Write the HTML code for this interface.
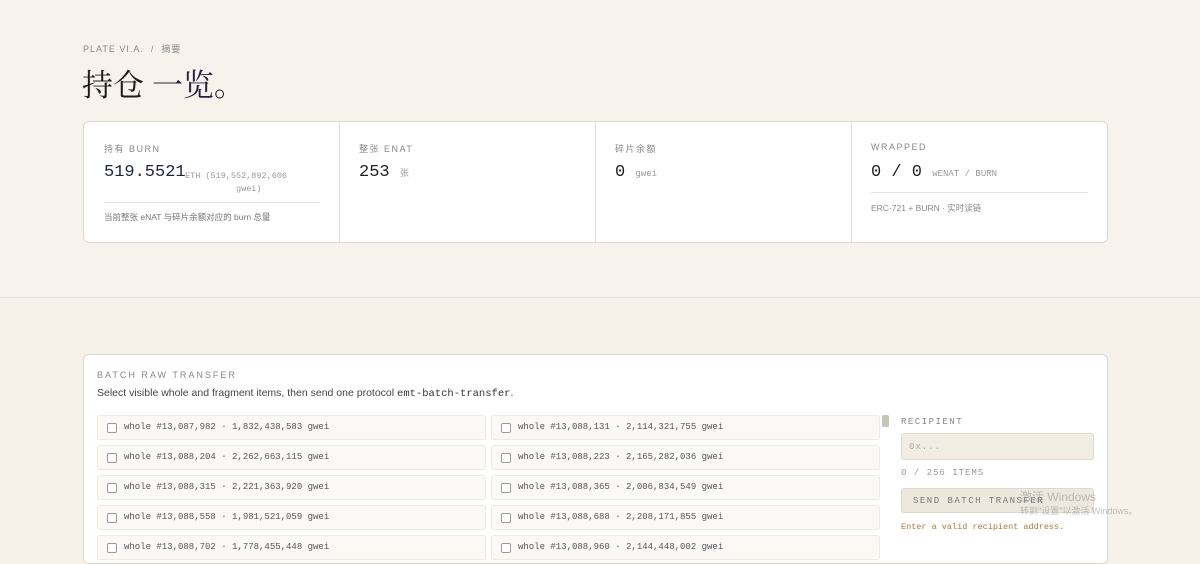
<!DOCTYPE html>
<html><head><meta charset="utf-8"><style>
*{box-sizing:border-box;margin:0;padding:0}
body{width:1200px;height:547px;overflow:hidden;background:#f6f2ea;font-family:"Liberation Sans","Noto Sans CJK SC",sans-serif;position:relative;color:#222}
.abs{position:absolute}
.mono{font-family:"Liberation Mono","Noto Sans CJK SC",monospace}
.lbl{font-size:9px;letter-spacing:1.5px;color:#888}
.card{position:absolute;left:83px;top:121px;width:1025px;height:122px;background:#fff;border:1px solid #dcd8cf;border-radius:6px}
.col{position:absolute;top:0;height:120px;border-right:1px solid #e2ded6}
.row{position:absolute;height:25px;background:#fbf9f5;border:1px solid #efebe3;border-radius:3px;font-size:9px;color:#555;line-height:23px;padding-left:26px}
.row:before{content:"";position:absolute;left:9px;top:7px;width:8px;height:8px;border:1px solid #999;border-radius:2px;background:#fff}
</style></head><body>
<div class="abs" style="left:0;top:0;width:1200px;height:298px;background:#f7f3ec;border-bottom:1px solid #ebe6dc"></div>
<div class="abs lbl" style="left:83px;top:42px;letter-spacing:1px;font-size:9px">PLATE VI.A. &nbsp;/&nbsp; 摘要</div>
<div class="abs" style="left:82px;top:60px;font-family:'Noto Serif CJK SC',serif;font-size:31px;color:#1c1c1c">持仓 <span style="color:#23233d">一览</span>。</div>
<div class="card">
 <div class="col" style="left:0;width:256px">
  <div class="abs lbl" style="left:20px;top:20px">持有 BURN</div>
  <div class="abs mono" style="left:20px;top:41px;font-size:17px;color:#1e2340">519.5521</div>
  <div class="abs mono" style="left:101px;top:48px;font-size:8.5px;color:#999;line-height:13px;width:130px">ETH (519,552,892,606 <br>&nbsp;&nbsp;&nbsp;&nbsp;&nbsp;&nbsp;&nbsp;&nbsp;&nbsp;&nbsp;gwei)</div>
  <div class="abs" style="left:20px;top:80px;width:216px;border-top:1px solid #e6e2da"></div>
  <div class="abs" style="left:20px;top:89px;font-size:8.5px;color:#777">当前整张 eNAT 与碎片余额对应的 burn 总量</div>
 </div>
 <div class="col" style="left:256px;width:256px">
  <div class="abs lbl" style="left:19px;top:20px">整张 ENAT</div>
  <div class="abs mono" style="left:19px;top:41px;font-size:17px">253 <span style="font-size:9px;color:#999">张</span></div>
 </div>
 <div class="col" style="left:512px;width:256px">
  <div class="abs lbl" style="left:19px;top:20px">碎片余额</div>
  <div class="abs mono" style="left:19px;top:41px;font-size:17px">0 <span style="font-size:9px;color:#999">gwei</span></div>
 </div>
 <div class="col" style="left:768px;width:256px;border:none">
  <div class="abs lbl" style="left:19px;top:20px">WRAPPED</div>
  <div class="abs mono" style="left:19px;top:41px;font-size:17px">0 / 0 <span style="font-size:9px;color:#999">wENAT / BURN</span></div>
  <div class="abs" style="left:19px;top:70px;width:217px;border-top:1px solid #e6e2da"></div>
  <div class="abs" style="left:19px;top:80px;font-size:8.5px;color:#888">ERC-721 + BURN · 实时读链</div>
 </div>
</div>
<div class="abs" style="left:83px;top:354px;width:1025px;height:210px;background:#fff;border:1px solid #dcd8cf;border-radius:6px"></div>
<div class="abs lbl" style="left:97px;top:370px;letter-spacing:2px">BATCH RAW TRANSFER</div>
<div class="abs" style="left:97px;top:387px;font-size:10.5px;color:#444">Select visible whole and fragment items, then send one protocol <span class="mono" style="color:#333">emt-batch-transfer</span>.</div>
<div class="row mono" style="left:97px;top:415px;width:389px">whole #13,087,982 · 1,832,438,583 gwei</div>
<div class="row mono" style="left:97px;top:445px;width:389px">whole #13,088,204 · 2,262,663,115 gwei</div>
<div class="row mono" style="left:97px;top:475px;width:389px">whole #13,088,315 · 2,221,363,920 gwei</div>
<div class="row mono" style="left:97px;top:505px;width:389px">whole #13,088,558 · 1,981,521,059 gwei</div>
<div class="row mono" style="left:97px;top:535px;width:389px">whole #13,088,702 · 1,778,455,448 gwei</div>
<div class="row mono" style="left:491px;top:415px;width:389px">whole #13,088,131 · 2,114,321,755 gwei</div>
<div class="row mono" style="left:491px;top:445px;width:389px">whole #13,088,223 · 2,165,282,036 gwei</div>
<div class="row mono" style="left:491px;top:475px;width:389px">whole #13,088,365 · 2,006,834,549 gwei</div>
<div class="row mono" style="left:491px;top:505px;width:389px">whole #13,088,688 · 2,208,171,855 gwei</div>
<div class="row mono" style="left:491px;top:535px;width:389px">whole #13,088,960 · 2,144,448,002 gwei</div>
<div class="abs" style="left:882px;top:415px;width:7px;height:12px;background:#c9c4ba;border-radius:2px"></div>
<div class="abs lbl mono" style="left:901px;top:417px">RECIPIENT</div>
<div class="abs mono" style="left:901px;top:433px;width:193px;height:27px;background:#f1ede3;border:1px solid #e0dbcf;border-radius:3px;font-size:9px;color:#aaa;padding:8px 0 0 7px;letter-spacing:1px">0x...</div>
<div class="abs mono" style="left:901px;top:468px;font-size:9px;color:#999;letter-spacing:1px">0 / 256 ITEMS</div>
<div class="abs mono" style="left:901px;top:488px;width:193px;height:25px;background:#ece8de;border:1px solid #ddd8cc;border-radius:3px;font-size:9px;color:#777;padding:7px 0 0 11px;letter-spacing:1.5px">SEND BATCH TRANSFER</div>
<div class="abs mono" style="left:901px;top:522px;font-size:8.5px;color:#a87a3c">Enter a valid recipient address.</div>
<div class="abs" style="left:1020px;top:488px;font-size:12px;color:rgba(150,150,150,.6)">激活 Windows</div>
<div class="abs" style="left:1020px;top:504px;font-size:9px;color:rgba(150,150,150,.6)">转到"设置"以激活 Windows。</div>
</body></html>
